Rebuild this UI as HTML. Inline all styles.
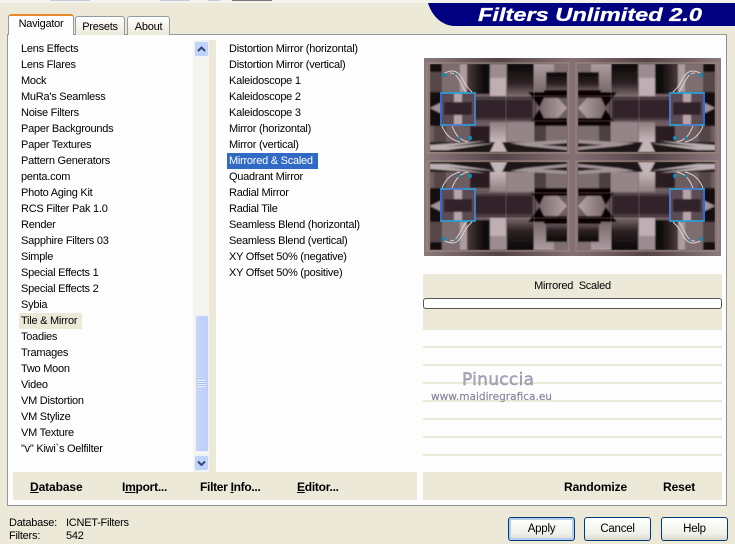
<!DOCTYPE html>
<html><head><meta charset="utf-8"><style>
html,body{margin:0;padding:0}
body{width:735px;height:538px;position:relative;overflow:hidden;background:#ece9d8;font-family:"Liberation Sans",sans-serif;font-size:11px;letter-spacing:-.25px;color:#000}
.a{position:absolute}
.l{position:absolute;white-space:pre;line-height:16px;height:16px;font-size:11px}
.b{position:absolute;font-weight:bold;font-size:12px;white-space:pre;line-height:16px;top:479px;letter-spacing:-.1px}
.tab{position:absolute;border:1px solid #919b9c;border-bottom:0;border-radius:3px 3px 0 0;background:linear-gradient(#fff,#ece9d8);text-align:center;line-height:20px;box-sizing:border-box}
.btn{position:absolute;top:517px;width:67px;height:24px;box-sizing:border-box;border:1px solid #003c74;border-radius:3px;background:linear-gradient(#fff,#f0f0ea 70%,#dcd8cc);text-align:center;line-height:22px;font-size:11.5px}
.sl{position:absolute;left:423px;width:299px;height:2px;background:#ece9d8}
.sb{position:absolute;left:194px;width:15px;height:16px;box-sizing:border-box;border:1px solid #eef2fd;border-radius:2px;background:#c1d3fb}
</style></head><body>
<div class="a" style="left:0;top:0;width:735px;height:3px;background:#f4f3ee"></div>
<div class="a" style="left:50px;top:0;width:40px;height:1px;background:#c4cbe0"></div>
<div class="a" style="left:160px;top:0;width:30px;height:1px;background:#c4cbe0"></div>
<div class="a" style="left:208px;top:0;width:12px;height:1px;background:#c4cbe0"></div>
<div class="a" style="left:232px;top:0;width:40px;height:1px;background:#777"></div>
<svg class="a" style="left:428px;top:0" width="307" height="30">
<path d="M0 3 H307 V26 H27 C14 26 4 16 0 3 Z" fill="#000080"/>
<text x="50" y="21" font-family="Liberation Sans" font-weight="bold" font-style="italic" font-size="18.5" letter-spacing="0" fill="#fff" stroke="#fff" stroke-width=".3" textLength="224" lengthAdjust="spacingAndGlyphs">Filters Unlimited 2.0</text></svg>

<div class="a" style="left:7px;top:34px;width:720px;height:472px;box-sizing:border-box;border:1px solid #919b9c;border-right-color:#8a9294;border-bottom-color:#8a9294;background:#fdfdfe"></div>
<div class="tab" style="left:75px;top:16px;width:50px;height:19px">Presets</div>
<div class="tab" style="left:127px;top:16px;width:43px;height:19px">About</div>
<div class="a" style="left:8px;top:14px;width:66px;height:21px;box-sizing:border-box;border:1px solid #919b9c;border-top:2px solid #e68b2c;border-bottom:0;border-radius:3px 3px 0 0;background:#fdfdfe;text-align:center;line-height:17px">Navigator</div>

<div class="a" style="left:193px;top:40px;width:16px;height:432px;background:#f5f4ee"></div>
<div class="a" style="left:209px;top:40px;width:7px;height:432px;background:#ece9d8"></div>
<div class="a" style="left:13px;top:472px;width:404px;height:28px;background:#ece9d8"></div>
<div class="a" style="left:423px;top:472px;width:299px;height:28px;background:#ece9d8"></div>

<div class="sb" style="top:41px"></div>
<svg class="a" style="left:194px;top:41px" width="15" height="16"><path d="M4 10 L7.5 6.5 L11 10" fill="none" stroke="#34487a" stroke-width="2"/></svg>
<div class="a" style="left:195px;top:315px;width:14px;height:137px;box-sizing:border-box;border:1px solid #eef2fd;border-radius:2px;background:linear-gradient(90deg,#c9d6fa,#bccdf9)"></div>
<div class="a" style="left:198px;top:380px;width:8px;height:7px;background:repeating-linear-gradient(#eef2fd 0 1px,#a9bcec 1px 2px)"></div>
<div class="sb" style="top:455px"></div>
<svg class="a" style="left:194px;top:455px" width="15" height="16"><path d="M4 6.5 L7.5 10 L11 6.5" fill="none" stroke="#34487a" stroke-width="2"/></svg>

<div class="a" style="left:19px;top:313px;width:63px;height:16px;background:#ece9d8"></div>
<div class="l" style="left:21px;top:41px">Lens Effects</div>
<div class="l" style="left:21px;top:57px">Lens Flares</div>
<div class="l" style="left:21px;top:73px">Mock</div>
<div class="l" style="left:21px;top:89px">MuRa's Seamless</div>
<div class="l" style="left:21px;top:105px">Noise Filters</div>
<div class="l" style="left:21px;top:121px">Paper Backgrounds</div>
<div class="l" style="left:21px;top:137px">Paper Textures</div>
<div class="l" style="left:21px;top:153px">Pattern Generators</div>
<div class="l" style="left:21px;top:169px">penta.com</div>
<div class="l" style="left:21px;top:185px">Photo Aging Kit</div>
<div class="l" style="left:21px;top:201px">RCS Filter Pak 1.0</div>
<div class="l" style="left:21px;top:217px">Render</div>
<div class="l" style="left:21px;top:233px">Sapphire Filters 03</div>
<div class="l" style="left:21px;top:249px">Simple</div>
<div class="l" style="left:21px;top:265px">Special Effects 1</div>
<div class="l" style="left:21px;top:281px">Special Effects 2</div>
<div class="l" style="left:21px;top:297px">Sybia</div>
<div class="l" style="left:21px;top:313px">Tile &amp; Mirror</div>
<div class="l" style="left:21px;top:329px">Toadies</div>
<div class="l" style="left:21px;top:345px">Tramages</div>
<div class="l" style="left:21px;top:361px">Two Moon</div>
<div class="l" style="left:21px;top:377px">Video</div>
<div class="l" style="left:21px;top:393px">VM Distortion</div>
<div class="l" style="left:21px;top:409px">VM Stylize</div>
<div class="l" style="left:21px;top:425px">VM Texture</div>
<div class="l" style="left:21px;top:441px">"v" Kiwi`s Oelfilter</div>

<div class="a" style="left:227px;top:153px;width:91px;height:16px;background:#316ac5"></div>
<div class="l" style="left:229px;top:41px">Distortion Mirror (horizontal)</div>
<div class="l" style="left:229px;top:57px">Distortion Mirror (vertical)</div>
<div class="l" style="left:229px;top:73px">Kaleidoscope 1</div>
<div class="l" style="left:229px;top:89px">Kaleidoscope 2</div>
<div class="l" style="left:229px;top:105px">Kaleidoscope 3</div>
<div class="l" style="left:229px;top:121px">Mirror (horizontal)</div>
<div class="l" style="left:229px;top:137px">Mirror (vertical)</div>
<div class="l" style="left:229px;top:153px;color:#fff">Mirrored &amp; Scaled</div>
<div class="l" style="left:229px;top:169px">Quadrant Mirror</div>
<div class="l" style="left:229px;top:185px">Radial Mirror</div>
<div class="l" style="left:229px;top:201px">Radial Tile</div>
<div class="l" style="left:229px;top:217px">Seamless Blend (horizontal)</div>
<div class="l" style="left:229px;top:233px">Seamless Blend (vertical)</div>
<div class="l" style="left:229px;top:249px">XY Offset 50% (negative)</div>
<div class="l" style="left:229px;top:265px">XY Offset 50% (positive)</div>

<svg class="a" style="left:424px;top:58px" width="297" height="198" viewBox="0 0 297 198">
<defs>
<linearGradient id="v1" x1="0" y1="0" x2="0" y2="1"><stop offset="0" stop-color="#0a0606"/><stop offset=".6" stop-color="#2e2224"/><stop offset="1" stop-color="#7a6a6c"/></linearGradient>
<linearGradient id="v2" x1="0" y1="0" x2="0" y2="1"><stop offset="0" stop-color="#8f7e80"/><stop offset="1" stop-color="#c8b8bc"/></linearGradient>
<linearGradient id="v3" x1="0" y1="0" x2="0" y2="1"><stop offset="0" stop-color="#ad9da1"/><stop offset="1" stop-color="#6e5d60"/></linearGradient>
<linearGradient id="h1" x1="0" y1="0" x2="1" y2="0"><stop offset="0" stop-color="#8c797c"/><stop offset=".5" stop-color="#544346"/><stop offset="1" stop-color="#857174"/></linearGradient>
<linearGradient id="h2" x1="0" y1="0" x2="1" y2="0"><stop offset="0" stop-color="#78666a"/><stop offset="1" stop-color="#b5a5a8"/></linearGradient>
<linearGradient id="h3" x1="0" y1="0" x2="1" y2="0"><stop offset="0" stop-color="#4a3c3e"/><stop offset=".7" stop-color="#100a0a"/><stop offset="1" stop-color="#0a0606"/></linearGradient>
<filter id="s" x="0" y="0" width="1" height="1"><feGaussianBlur stdDeviation="0.8"/></filter>
<g id="q">
<rect width="149" height="99" fill="url(#h1)"/>
<rect x="3" y="5" width="142" height="90" fill="none" stroke="#a08c80" stroke-width="1"/>
<g filter="url(#s)">
<rect x="6" y="6" width="137" height="88" fill="#6e5d60"/>
<rect x="6" y="6" width="12" height="8" fill="#141010"/>
<rect x="18" y="6" width="22" height="28" fill="#7e6e70"/>
<rect x="6" y="14" width="12" height="20" fill="#574749"/>
<rect x="36" y="6" width="7" height="28" fill="#ac9ca0"/>
<rect x="43" y="6" width="24" height="30" fill="url(#h3)"/>
<rect x="66" y="6" width="16" height="14" fill="#9c8c90"/>
<rect x="66" y="20" width="16" height="18" fill="#bfafb3"/>
<rect x="83" y="6" width="27" height="32" fill="url(#v1)"/>
<rect x="110" y="6" width="20" height="34" fill="url(#v3)"/>
<rect x="122" y="14" width="21" height="20" fill="url(#v1)"/>
<rect x="130" y="6" width="13" height="8" fill="#806e70"/>
<rect x="6" y="34" width="12" height="34" fill="#120c0c"/>
<path d="M6 50 L18 44 V56 Z" fill="#a39295"/>
<rect x="50" y="38" width="62" height="26" fill="#4c3e42"/>
<rect x="50" y="42" width="58" height="18" fill="#30232a"/>
<path d="M104 34 H120 V68 H104 L116 50 Z" fill="#0a0606"/>
<rect x="120" y="32" width="23" height="8" fill="#0a0606"/>
<rect x="120" y="60" width="23" height="8" fill="#0a0606"/>
<path d="M120 40 H134 L143 50 L134 60 H120 L115 50 Z" fill="url(#h2)"/>
<rect x="6" y="68" width="40" height="16" fill="#6e5d60"/>
<rect x="10" y="68" width="12" height="16" fill="#554547"/>
<rect x="46" y="68" width="20" height="16" fill="#2a1f24"/>
<rect x="66" y="64" width="16" height="20" fill="url(#v2)"/>
<rect x="83" y="64" width="27" height="20" fill="#968588"/>
<rect x="110" y="68" width="12" height="16" fill="#4e3f41"/>
<rect x="122" y="68" width="21" height="16" fill="#7e6e70"/>
<rect x="6" y="84" width="137" height="10" fill="#1e1517"/>
<path d="M6 87 L62 83 L22 89 L72 85 L24 92 H6 Z" fill="#bdb0b2"/>
<path d="M86 85 L143 82 V85 L118 87 L143 89 V92 L102 88 Z" fill="#a39497"/>
<path d="M66 94 L71 84 H78 L83 94 Z" fill="#c4b5b7"/>
<rect x="17" y="35" width="34" height="32" fill="#5c4c52"/>
<rect x="30" y="35" width="8" height="32" fill="#b5a3a7"/>
<rect x="20" y="44" width="28" height="13" fill="#30222a"/>
</g>
<path d="M50 38 H143 M50 63 H143 M82 6 V84 M110 6 V84" stroke="#b5a6a9" stroke-width=".5" opacity=".6"/>
<rect x="17" y="35" width="34" height="32" fill="none" stroke="#28a0d8" stroke-width="1.7"/>
<path d="M17 36 V66" stroke="#3068e0" stroke-width="1.7"/>
<path d="M51 36 V66 M22 67 H40" stroke="#7060d0" stroke-width="1.2" opacity=".7"/>
<path d="M19 16 C30 10 34 14 38 20 C42 28 44 30 48 34 M26 15 C34 14 36 26 42 34" fill="none" stroke="#dcd0d4" stroke-width="1"/>
<path d="M18 68 C22 78 28 82 36 84 M28 68 C32 78 36 82 44 84" fill="none" stroke="#dcd0d4" stroke-width="1"/>
<circle cx="20" cy="17" r="2" fill="#1888b0"/><circle cx="35" cy="80" r="1.5" fill="#1888b0"/><circle cx="46" cy="80" r="2.2" fill="#1888b0"/><circle cx="31" cy="16" r="1" fill="#1888b0"/>
</g>
</defs>
<use href="#q"/>
<use href="#q" transform="translate(297,0) scale(-1,1)"/>
<use href="#q" transform="translate(0,198) scale(1,-1)"/>
<use href="#q" transform="translate(297,198) scale(-1,-1)"/>
</svg>

<div class="a" style="left:423px;top:274px;width:299px;height:56px;background:#ece9d8"></div>
<div class="a" style="left:423px;top:279px;width:299px;text-align:center;line-height:14px;white-space:pre">Mirrored  Scaled</div>
<div class="a" style="left:423px;top:298px;width:299px;height:11px;box-sizing:border-box;border:1px solid #555;border-radius:3px;background:#fff"></div>
<div class="sl" style="top:346px"></div>
<div class="sl" style="top:364px"></div>
<div class="sl" style="top:382px"></div>
<div class="sl" style="top:400px"></div>
<div class="sl" style="top:418px"></div>
<div class="sl" style="top:436px"></div>
<div class="sl" style="top:454px"></div>

<svg class="a" style="left:425px;top:365px" width="135" height="42"><text x="37" y="20" font-family="DejaVu Sans" font-size="17" letter-spacing="0" fill="#a6a6bc" stroke="#8c8ca4" stroke-width=".4" textLength="72" lengthAdjust="spacing">Pinuccia</text><text x="6" y="35" font-family="DejaVu Sans" font-size="10.5" letter-spacing="0" fill="#85859a" stroke="#85859a" stroke-width=".15" textLength="121" lengthAdjust="spacingAndGlyphs">www.maidiregrafica.eu</text></svg>

<div class="b" style="left:30px"><u>D</u>atabase</div>
<div class="b" style="left:122px;letter-spacing:-.25px">I<u>m</u>port...</div>
<div class="b" style="left:200px;letter-spacing:-.3px">Filter <u>I</u>nfo...</div>
<div class="b" style="left:297px;letter-spacing:-.25px"><u>E</u>ditor...</div>
<div class="b" style="left:564px">Randomize</div>
<div class="b" style="left:663px">Reset</div>

<div class="btn" style="left:508px;border-color:#003c74;box-shadow:inset 0 0 0 2px #b4cdf0">Apply</div>
<div class="btn" style="left:584px">Cancel</div>
<div class="btn" style="left:661px">Help</div>

<div class="l" style="left:9px;top:515px">Database:</div>
<div class="l" style="left:66px;top:515px">ICNET-Filters</div>
<div class="l" style="left:9px;top:528px">Filters:</div>
<div class="l" style="left:66px;top:528px">542</div>
</body></html>
